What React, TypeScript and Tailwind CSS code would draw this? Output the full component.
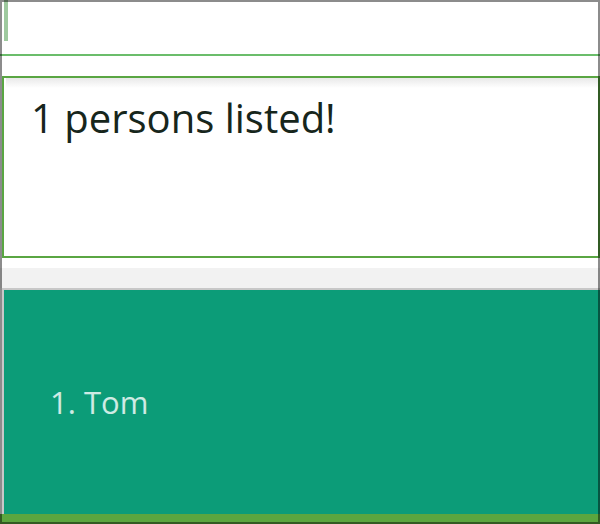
import React from 'react';

const App: React.FC = () => {
  const persons = ['Tom'];

  return (
    <div className="relative w-[600px] h-[524px] bg-white overflow-hidden flex flex-col" style={{ fontFamily: '"Open Sans", "Noto Sans", sans-serif' }}>
      {/* command box */}
      <div className="h-[56px] shrink-0 border-b-2 border-[#6bbd6b]">
        <div className="ml-[4px] w-[4px] h-[41px] bg-[#9ec99e]" />
      </div>

      <div className="h-[20px] shrink-0" />

      {/* result display */}
      <div className="ml-[2px] h-[182px] shrink-0 border-2 border-[#5aa643] bg-white">
        <div className="ml-[2px] h-[10px] bg-gradient-to-b from-[#e9e9e9] to-white" />
        <p className="mt-[10px] pl-[27px] text-[40px] leading-none text-[#17261c]">
          {persons.length} persons listed!
        </p>
      </div>

      <div className="h-[10px] shrink-0" />
      <div className="h-[20px] shrink-0 bg-[#f2f2f2]" />

      {/* person list */}
      <div className="flex-1 ml-[2px] border-t-2 border-l-2 border-[#c8c8c8] bg-[#0c9c78] flex flex-col justify-center pl-[46px]">
        {persons.map((name, i) => (
          <div key={name} className="text-[31px] leading-none text-white/80">
            {i + 1}. {name}
          </div>
        ))}
      </div>

      {/* status bar */}
      <div className="h-[10px] shrink-0 bg-[#5ba63f]" />

      <div className="absolute inset-0 border-2 border-black/45 pointer-events-none" />
    </div>
  );
};

export default App;
